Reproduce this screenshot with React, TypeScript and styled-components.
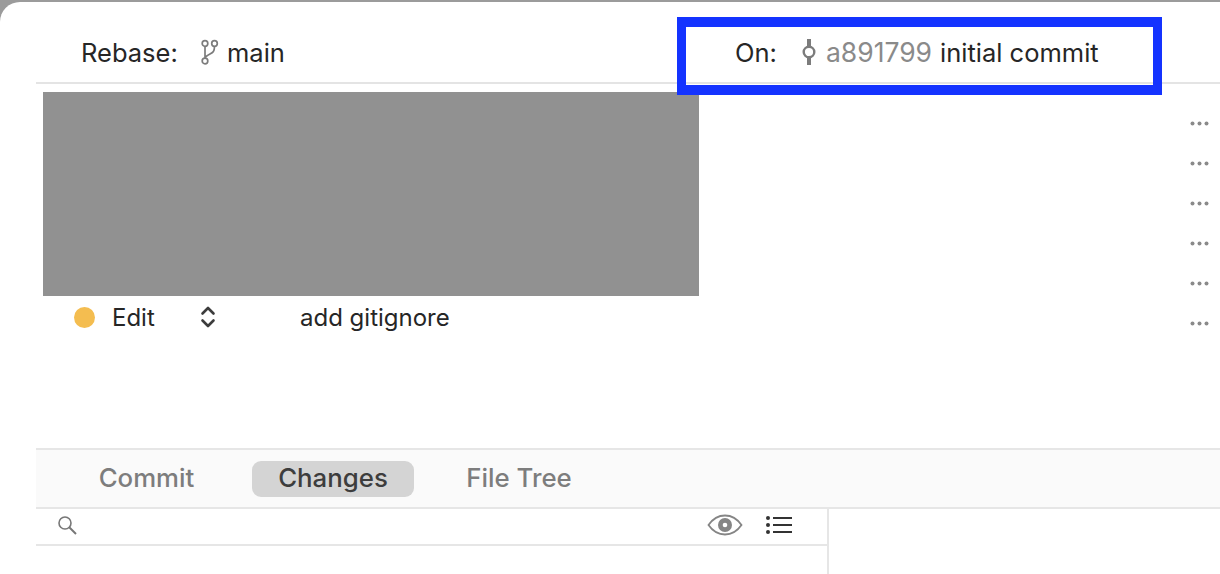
import React from 'react';
import styled, { createGlobalStyle } from 'styled-components';

const GlobalStyle = createGlobalStyle`
  html, body {
    margin: 0;
    padding: 0;
    background: #ffffff;
  }
  body {
    font-family: Inter, "Noto Sans", "Liberation Sans", sans-serif;
    color: #262626;
    -webkit-font-smoothing: antialiased;
  }
`;

const Backdrop = styled.div`
  position: relative;
  width: 1220px;
  height: 574px;
  overflow: hidden;
  background: #9b9b9b;
  padding-top: 2px;
  box-sizing: border-box;
`;

const Window = styled.div`
  height: 572px;
  background: #ffffff;
  border-top-left-radius: 20px;
  padding-left: 36px;
  display: flex;
  flex-direction: column;
`;

const TopBar = styled.header`
  height: 60px;
  flex: none;
  display: flex;
  align-items: center;
  padding-top: 20px;
  border-bottom: 2px solid #e4e4e4;
  font-size: 25.5px;
`;

const TopGroup = styled.div<{ $width: number; $pad: number }>`
  width: ${(p) => p.$width}px;
  padding-left: ${(p) => p.$pad}px;
  box-sizing: border-box;
  display: flex;
  align-items: center;
  flex: none;
`;

const TopLabel = styled.span<{ $width: number }>`
  width: ${(p) => p.$width}px;
  flex: none;
`;

const Sha = styled.span`
  color: #8a8a8a;
  font-size: 26.5px;
  margin: 0 8px 0 9px;
`;

const CommitList = styled.section`
  height: 364px;
  flex: none;
  padding-top: 19px;
  box-sizing: border-box;
`;

const Row = styled.div`
  height: 40px;
  display: flex;
  align-items: center;
  justify-content: flex-end;
  padding-right: 11px;
  position: relative;
`;

const RowMain = styled.div`
  flex: 1;
  display: flex;
  align-items: center;
  font-size: 24px;
  padding-left: 38px;
  margin-top: -12px;
`;

const StatusDot = styled.span`
  width: 21px;
  height: 21px;
  border-radius: 50%;
  background: #f4bd50;
  flex: none;
  margin-right: 17px;
`;

const Action = styled.span`
  width: 88px;
  flex: none;
`;

const Message = styled.span`
  margin-left: 84px;
`;

const MoreDots = styled.svg`
  width: 19px;
  height: 5px;
  flex: none;
  fill: #8a8a8a;
`;

const Redaction = styled.div`
  position: absolute;
  left: 43px;
  top: 92px;
  width: 656px;
  height: 204px;
  background: #919191;
`;

const Highlight = styled.div`
  position: absolute;
  left: 677px;
  top: 17px;
  width: 485px;
  height: 78px;
  box-sizing: border-box;
  border: 9px solid #1433ff;
  border-width: 10px 9px;
`;

const Tabs = styled.nav`
  height: 57px;
  flex: none;
  display: flex;
  align-items: center;
  background: #fafafa;
  border-top: 2px solid #e6e6e6;
  border-bottom: 2px solid #e6e6e6;
  font-size: 25.8px;
  font-weight: 500;
`;

const Tab = styled.span<{ $active?: boolean; $width: number; $inset?: number }>`
  width: ${(p) => p.$width}px;
  height: 36px;
  flex: none;
  box-sizing: border-box;
  padding: 0 0 2px ${(p) => p.$inset ?? 0}px;
  display: flex;
  align-items: center;
  justify-content: center;
  border-radius: 9px;
  color: ${(p) => (p.$active ? '#3d3d3d' : '#7d7d7d')};
  background: ${(p) => (p.$active ? '#d4d4d4' : 'transparent')};
`;

const Lower = styled.div`
  flex: 1;
  display: flex;
  min-height: 0;
`;

const FilesPane = styled.div`
  width: 791px;
  flex: none;
  border-right: 2px solid #e6e6e6;
`;

const SearchRow = styled.div`
  height: 31px;
  display: flex;
  align-items: center;
  justify-content: space-between;
  border-bottom: 2px solid #e6e6e6;
  padding: 0 34px 4px 21px;
`;

const RowTools = styled.div`
  display: flex;
  align-items: center;
  gap: 23px;
`;

const rows = [0, 1, 2, 3, 4, 5];

const BranchIcon = () => (
  <svg width="20" height="26" viewBox="0 0 20 26" fill="none" stroke="#7c7c7c" strokeWidth="1.7" style={{ marginRight: 7 }}>
    <circle cx="5" cy="4.500" r="2.800" />
    <circle cx="14.500" cy="4.500" r="2.800" />
    <circle cx="5" cy="22" r="2.800" />
    <path d="M5 7.300v11.900M14.500 7.300c0 5-1.500 6.200-4.500 7.700-3 1.500-4.500 2.500-5 4.200" />
  </svg>
);

const CommitIcon = () => (
  <svg width="16" height="26" viewBox="0 0 16 26" fill="none" stroke="#7c7c7c" style={{ marginLeft: 24 }}>
    <circle cx="8" cy="13" r="5.300" strokeWidth="2.400" />
    <path d="M8 0v7M8 19v7" strokeWidth="4" />
  </svg>
);

const Chevrons = () => (
  <svg width="16" height="24" viewBox="0 0 16 24" fill="none" stroke="#3c3c3c" strokeWidth="2.600" strokeLinecap="round" strokeLinejoin="round">
    <path d="M2.500 8.500 8 3l5.500 5.500M2.500 15.500 8 21l5.500-5.500" />
  </svg>
);

const SearchIcon = () => (
  <svg width="20" height="20" viewBox="0 0 20 20" fill="none" stroke="#777777">
    <circle cx="8" cy="8" r="6" strokeWidth="1.600" />
    <path d="M12 12l7 7" strokeWidth="2" />
  </svg>
);

const EyeIcon = () => (
  <svg width="36" height="22" viewBox="0 0 36 22" fill="none">
    <path d="M1.500 11C6 4.500 11.500 1.500 18 1.500S30 4.500 34.500 11C30 17.500 24.500 20.500 18 20.500S6 17.500 1.500 11z" stroke="#858585" strokeWidth="1.800" />
    <circle cx="18" cy="11" r="7" fill="#858585" />
    <circle cx="18" cy="11" r="2.300" fill="#ffffff" />
  </svg>
);

const ListIcon = () => (
  <svg width="27" height="20" viewBox="0 0 27 20" fill="none" stroke="#333333" strokeWidth="2">
    <path d="M7 3h19M7 10h19M7 17h19" />
    <g fill="#333333" stroke="none">
      <circle cx="2" cy="3" r="2" />
      <circle cx="2" cy="10" r="2" />
      <circle cx="2" cy="17" r="2" />
    </g>
  </svg>
);

const App: React.FC = () => {
  return (
    <>
      <GlobalStyle />
      <Backdrop>
        <Window>
          <TopBar>
            <TopGroup $width={641} $pad={45}>
              <TopLabel $width={119}>Rebase:</TopLabel>
              <BranchIcon />
              <span>main</span>
            </TopGroup>
            <TopGroup $width={480} $pad={58}>
              <span>On:</span>
              <CommitIcon />
              <Sha>a891799</Sha>
              <span>initial commit</span>
            </TopGroup>
          </TopBar>
          <CommitList>
            {rows.map((row) => (
              <Row key={row}>
                {row === 5 && (
                  <RowMain>
                    <StatusDot />
                    <Action>Edit</Action>
                    <Chevrons />
                    <Message>add gitignore</Message>
                  </RowMain>
                )}
                <MoreDots viewBox="0 0 19 5">
                  <circle cx="2.500" cy="2.500" r="2" />
                  <circle cx="9.500" cy="2.500" r="2" />
                  <circle cx="16.500" cy="2.500" r="2" />
                </MoreDots>
              </Row>
            ))}
          </CommitList>
          <Tabs>
            <Tab $width={216} $inset={5}>Commit</Tab>
            <Tab $width={162} $active>Changes</Tab>
            <Tab $width={210}>File Tree</Tab>
          </Tabs>
          <Lower>
            <FilesPane>
              <SearchRow>
                <SearchIcon />
                <RowTools>
                  <EyeIcon />
                  <ListIcon />
                </RowTools>
              </SearchRow>
            </FilesPane>
          </Lower>
        </Window>
        <Redaction />
        <Highlight />
      </Backdrop>
    </>
  );
};

export default App;
